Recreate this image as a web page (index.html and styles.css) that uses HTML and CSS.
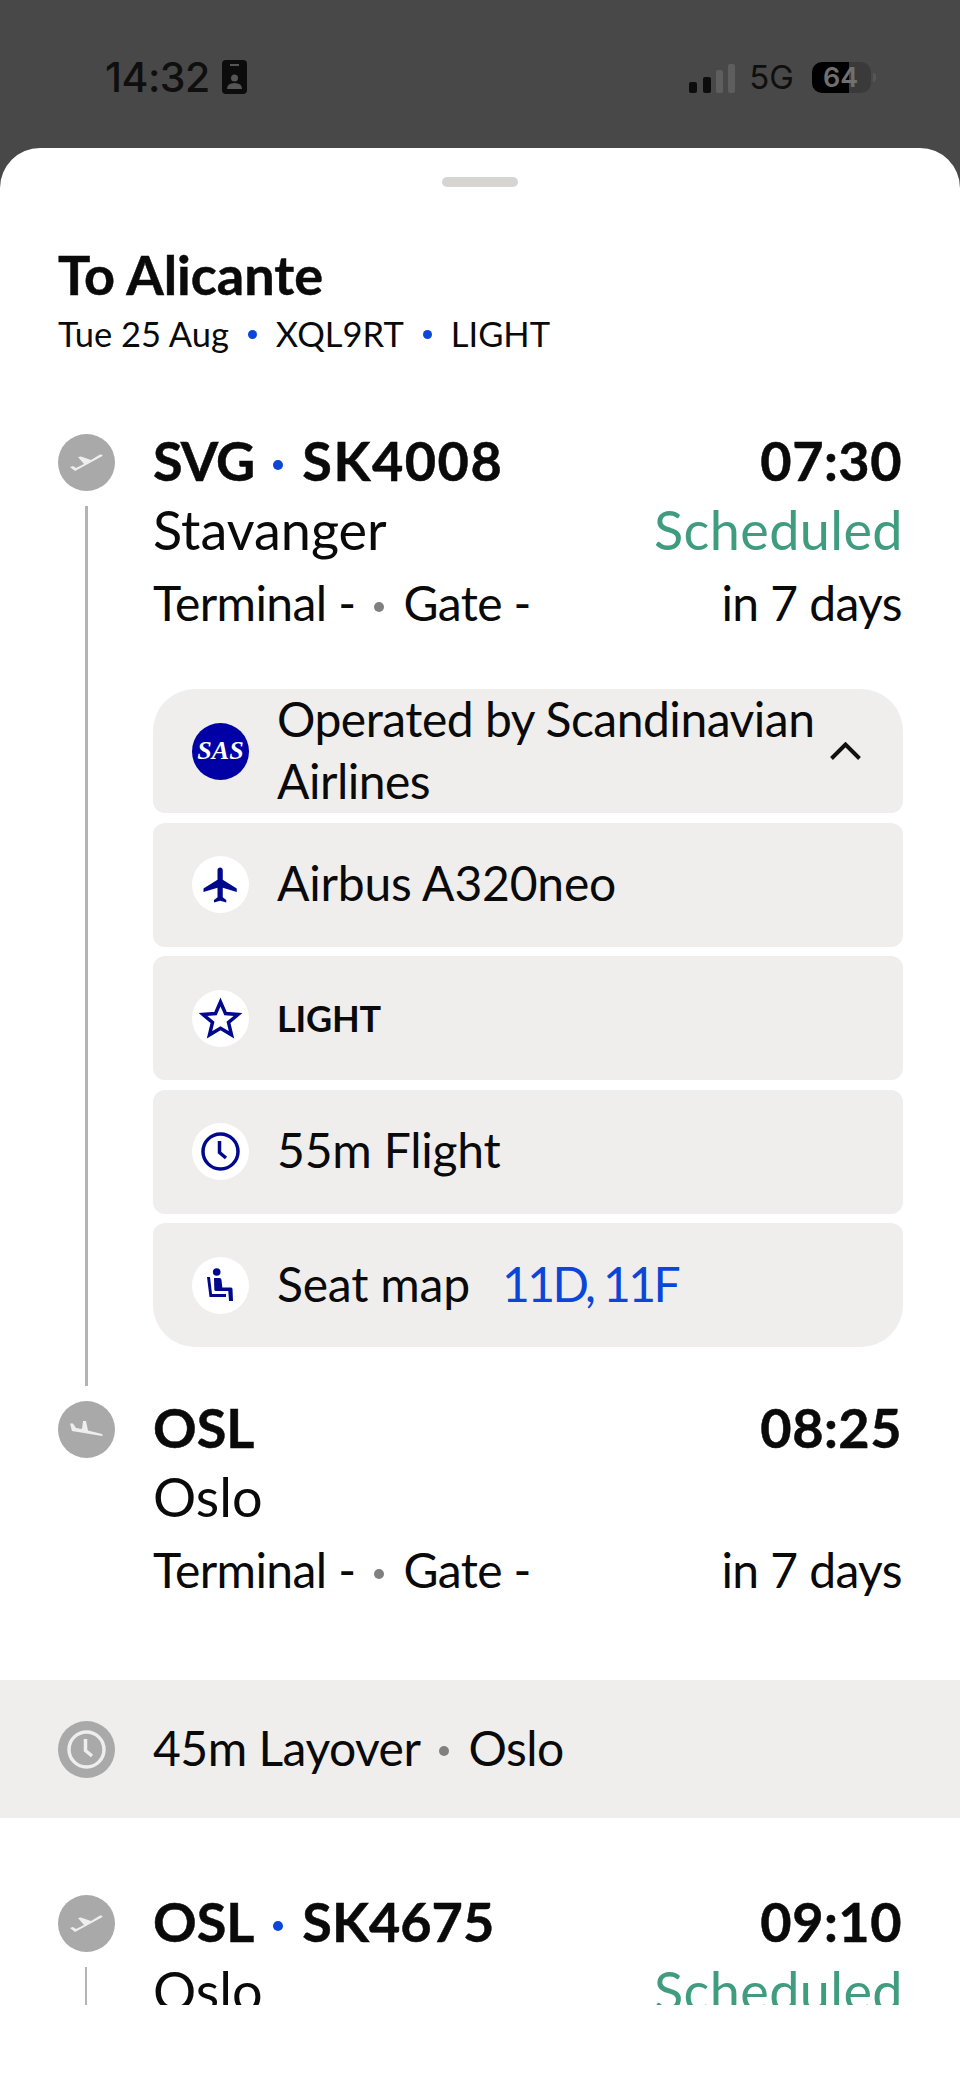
FILE: index.html
```html
<!DOCTYPE html>
<html lang="en">
<head>
    <meta charset="UTF-8">
    <meta name="viewport" content="width=device-width, initial-scale=1.0">
    <title>To Alicante</title>
    <link rel="stylesheet" href="styles.css">
</head>
<body>
    <svg class="sprite" width="0" height="0">
        <symbol id="takeoff" viewBox="0 0 57 57"><path d="M44.500 22L17 37l-5-4 3-1 3 2 8-4-6-7 3-.5L33 26l9-5.500q3-.5 2.500 1.500z"/></symbol>
        <symbol id="landing" viewBox="0 0 57 57"><path d="M12 22.500h3l3 4.500 6 1 1-8h3l2 9.500 14 3.500q1.500 1.500 0 2l-30-5z"/></symbol>
        <symbol id="clock" viewBox="0 0 57 57"><circle cx="28.500" cy="28.500" r="17.500" fill="none" stroke="currentColor" stroke-width="3.500"/><path d="M27.500 18v11.500l6.500 5.500" fill="none" stroke="currentColor" stroke-width="3.500"/></symbol>
    </svg>

    <div class="status-bar">
        <div class="status-left">
            <span class="status-time">14:32</span>
            <svg class="status-badge" viewBox="0 0 25 34"><rect width="25" height="34" rx="4" fill="#0c0c0c"/><rect x="8" y="4" width="9" height="2" fill="#555"/><circle cx="12.500" cy="18" r="3.500" fill="#555"/><path d="M5 29q0-6 7.500-6T20 29z" fill="#555"/></svg>
        </div>
        <div class="status-right">
            <svg class="status-signal" viewBox="0 0 46 29"><rect y="18" width="8" height="11" rx="2" fill="#0c0c0c"/><rect x="14" y="13" width="8" height="16" rx="2" fill="#0c0c0c"/><rect x="27" y="6" width="7" height="23" rx="2" fill="#5e5e5e"/><rect x="39" width="7" height="29" rx="2" fill="#5e5e5e"/></svg>
            <span class="status-net">5G</span>
            <div class="battery"><div class="battery-fill"></div><span class="battery-level">64</span></div>
            <div class="battery-nub"></div>
        </div>
    </div>

    <div class="sheet">
        <div class="handle"></div>
        <h1>To Alicante</h1>
        <div class="subtitle">
            <span>Tue 25 Aug</span><i class="dot dot-blue"></i><span>XQL9RT</span><i class="dot dot-blue"></i><span>LIGHT</span>
        </div>

        <div class="itinerary">
            <div class="stop">
                <div class="marker">
                    <svg class="marker-icon"><use href="#takeoff"/></svg>
                    <div class="marker-line"></div>
                </div>
                <div class="stop-body">
                    <div class="row row-title">
                        <span class="code"><span class="code-tight">SVG</span><i class="dot dot-blue dot-title"></i><span class="code-wide">SK4008</span></span>
                        <span class="time">07:30</span>
                    </div>
                    <div class="row row-city">
                        <span>Stavanger</span>
                        <span class="scheduled">Scheduled</span>
                    </div>
                    <div class="row row-info">
                        <span>Terminal -<i class="dot dot-grey"></i>Gate -</span>
                        <span>in 7 days</span>
                    </div>

                    <div class="cards">
                        <div class="card card-first">
                            <div class="card-icon card-logo">SAS</div>
                            <span class="card-text">Operated by Scandinavian Airlines</span>
                            <svg class="chevron" viewBox="0 0 31 18"><path d="M1.500 16.500L15.500 2.500l14 14" fill="none" stroke="#111" stroke-width="4"/></svg>
                        </div>
                        <div class="card">
                            <div class="card-icon">
                                <svg class="glyph" viewBox="0 0 24 24" fill="currentColor"><path d="M21 16v-2l-8-5V3.500c0-.83-.67-1.500-1.500-1.500S10 2.670 10 3.500V9l-8 5v2l8-2.500V19l-2 1.500V22l3.500-1 3.500 1v-1.500L13 19v-5.500l8 2.500z"/></svg>
                            </div>
                            <span class="card-text">Airbus A320neo</span>
                        </div>
                        <div class="card">
                            <div class="card-icon">
                                <svg class="glyph-full" viewBox="0 0 57 57"><path d="M28.500 12l5 11.500 12.500 1-9.500 8 3 12.300-11-6.600-11 6.600 3-12.300-9.500-8 12.500-1z" fill="none" stroke="currentColor" stroke-width="3.500"/></svg>
                            </div>
                            <span class="card-text card-fare">LIGHT</span>
                        </div>
                        <div class="card">
                            <div class="card-icon">
                                <svg class="glyph-full"><use href="#clock"/></svg>
                            </div>
                            <span class="card-text">55m Flight</span>
                        </div>
                        <div class="card card-last">
                            <div class="card-icon">
                                <svg class="glyph-full" viewBox="0 0 57 57" fill="currentColor"><circle cx="24.700" cy="15" r="3.800"/><path d="M15 20h3l2 17h14v3H17.500z"/><path d="M22 21h5.500q1.800 0 2 2l.8 7.500H39q1.500 0 1.500 1.500l.5 12h-4l-.7-10H24q-1.500 0-1.700-1.500z"/></svg>
                            </div>
                            <span class="card-text">Seat map</span>
                            <span class="card-text seat-numbers">11D, 11F</span>
                        </div>
                    </div>
                </div>
            </div>

            <div class="stop stop-arrival">
                <div class="marker">
                    <svg class="marker-icon"><use href="#landing"/></svg>
                </div>
                <div class="stop-body">
                    <div class="row row-title">
                        <span class="code">OSL</span>
                        <span class="time">08:25</span>
                    </div>
                    <div class="row row-city">
                        <span>Oslo</span>
                    </div>
                    <div class="row row-info">
                        <span>Terminal -<i class="dot dot-grey"></i>Gate -</span>
                        <span>in 7 days</span>
                    </div>
                </div>
            </div>

            <div class="layover">
                <svg class="marker-icon"><use href="#clock"/></svg>
                <span class="layover-text">45m Layover<i class="dot dot-grey"></i>Oslo</span>
            </div>

            <div class="stop">
                <div class="marker">
                    <svg class="marker-icon"><use href="#takeoff"/></svg>
                    <div class="marker-line marker-line-thin"></div>
                </div>
                <div class="stop-body">
                    <div class="row row-title">
                        <span class="code">OSL<i class="dot dot-blue dot-title"></i>SK4675</span>
                        <span class="time">09:10</span>
                    </div>
                    <div class="row row-city">
                        <span>Oslo</span>
                        <span class="scheduled">Scheduled</span>
                    </div>
                </div>
            </div>
        </div>
    </div>
</body>
</html>
```

FILE: styles.css
```css
* {
    box-sizing: border-box;
}

body {
    margin: 0;
    height: 2087px;
    overflow: hidden;
    display: flex;
    flex-direction: column;
    background: #484848;
    color: #0a0a0a;
    font-family: 'Lato', sans-serif;
}

.sprite {
    position: absolute;
}

/* status bar */
.status-bar {
    flex: none;
    height: 148px;
    padding: 60px 0 0 105px;
    display: flex;
    justify-content: space-between;
    align-items: flex-start;
    color: #0f0f0f;
    font-family: 'Inter', sans-serif;
}

.status-left {
    display: flex;
    align-items: center;
    gap: 12px;
}

.status-time {
    font-size: 41px;
    line-height: 34px;
    font-weight: 500;
    letter-spacing: -0.5px;
}

.status-badge {
    width: 25px;
    height: 34px;
}

.status-right {
    display: flex;
    align-items: center;
    height: 34px;
    padding-right: 84px;
}

.status-signal {
    width: 46px;
    height: 29px;
    margin-top: 3px;
}

.status-net {
    margin-left: 14px;
    font-size: 33px;
    font-weight: 400;
}

.battery {
    position: relative;
    width: 59px;
    height: 31px;
    margin-left: 18px;
    border-radius: 10px;
    overflow: hidden;
    background: #3a3a3a;
}

.battery-fill {
    width: 37px;
    height: 100%;
    background: #000;
}

.battery-level {
    position: absolute;
    left: 11px;
    top: 0;
    font-size: 27px;
    line-height: 31px;
    font-weight: 600;
    color: #707070;
}

.battery-nub {
    width: 3px;
    height: 9px;
    margin-left: 2px;
    border-radius: 0 3px 3px 0;
    background: #565656;
}

/* sheet */
.sheet {
    flex: 1;
    min-height: 0;
    background: #fff;
    border-radius: 40px 40px 0 0;
    padding-bottom: 82px;
    display: flex;
    flex-direction: column;
}

.handle {
    flex: none;
    width: 76px;
    height: 10px;
    margin: 29px auto 0;
    border-radius: 5px;
    background: #d6d5d2;
}

h1 {
    flex: none;
    margin: 58px 0 0 58px;
    font-size: 54px;
    line-height: 60px;
    font-weight: 700;
    -webkit-text-stroke: 0.5px #0a0a0a;
}

.subtitle {
    flex: none;
    margin: 7px 0 0 58px;
    font-size: 34.5px;
    line-height: 44px;
    display: flex;
    align-items: center;
}

.itinerary {
    flex: 1;
    min-height: 0;
    margin-top: 72px;
    padding-top: 6px;
    overflow: hidden;
}

.dot {
    display: inline-block;
    border-radius: 50%;
    vertical-align: middle;
}

.dot-blue {
    width: 9px;
    height: 9px;
    margin: 0 19px;
    background: #0b46d8;
}

.dot-title {
    width: 10px;
    height: 10px;
    margin: 0 19px;
    position: relative;
    top: -2px;
}

.dot-grey {
    width: 10px;
    height: 10px;
    margin: 0 19px;
    position: relative;
    top: -2px;
    background: #808080;
}

/* stops */
.stop {
    display: flex;
    padding: 0 57px 0 58px;
}

.stop-arrival {
    margin-top: 15px;
}

.marker {
    flex: none;
    width: 95px;
    display: flex;
    flex-direction: column;
}

.marker-icon {
    flex: none;
    width: 57px;
    height: 57px;
    border-radius: 50%;
    background: #a9a9a9;
    fill: #eee;
    color: #eee;
}

.marker-line {
    flex: 1;
    width: 3px;
    margin: 15px 0 0 27px;
    background: #b4b4b4;
}

.marker-line-thin {
    width: 2px;
}

.stop-body {
    flex: 1;
    min-width: 0;
}

.row {
    display: flex;
    justify-content: space-between;
}

.row-title {
    margin-top: -1px;
    padding-right: 1px;
    font-size: 54px;
    line-height: 56px;
    font-weight: 700;
    -webkit-text-stroke: 0.5px #0a0a0a;
}

.code-tight {
    letter-spacing: -1px;
}

.code-wide {
    letter-spacing: 1.5px;
}

.time {
    letter-spacing: 0.5px;
}

.row-city {
    margin-top: 7px;
    font-size: 54px;
    line-height: 68px;
}

.row-info {
    margin-top: 9px;
    padding-right: 1px;
    font-size: 48px;
    line-height: 60px;
    letter-spacing: -0.6px;
}

.scheduled {
    color: #409c7e;
    letter-spacing: 0.4px;
}

/* detail cards */
.cards {
    margin-top: 56px;
    padding-bottom: 39px;
    display: flex;
    flex-direction: column;
    gap: 9.5px;
}

.card {
    height: 124px;
    padding-left: 39px;
    display: flex;
    align-items: center;
    gap: 28px;
    border-radius: 12px;
    background: #efeeec;
}

.card-first {
    border-radius: 42px 42px 12px 12px;
}

.card-last {
    border-radius: 12px 12px 42px 42px;
}

.card-icon {
    flex: none;
    width: 57px;
    height: 57px;
    border-radius: 50%;
    background: #fff;
    color: #00088c;
    display: flex;
    align-items: center;
    justify-content: center;
}

.card-logo {
    background: #0000a5;
    color: #fff;
    font-family: 'Liberation Serif', serif;
    font-size: 26px;
    font-weight: 700;
    font-style: italic;
}

.glyph {
    width: 42px;
    height: 42px;
}

.glyph-full {
    width: 57px;
    height: 57px;
}

.card-text {
    margin-bottom: 3px;
    font-size: 48px;
    line-height: 62px;
    letter-spacing: -0.2px;
}

.card-first .card-text {
    flex: 1;
    letter-spacing: -0.5px;
}

.card-fare {
    margin-bottom: 0;
    font-size: 36px;
    font-weight: 700;
}

.seat-numbers {
    margin-left: 4px;
    color: #0b46d8;
    letter-spacing: -2.6px;
}

.chevron {
    flex: none;
    width: 31px;
    height: 18px;
    margin: 0 42px 0 -28px;
}

/* layover */
.layover {
    height: 138px;
    margin-top: 80px;
    padding-left: 58px;
    display: flex;
    align-items: center;
    gap: 38px;
    background: #efeeec;
    font-size: 48px;
    letter-spacing: -0.5px;
}

.layover-text {
    margin-bottom: 4px;
}

.layover + .stop {
    margin-top: 77px;
}
```
